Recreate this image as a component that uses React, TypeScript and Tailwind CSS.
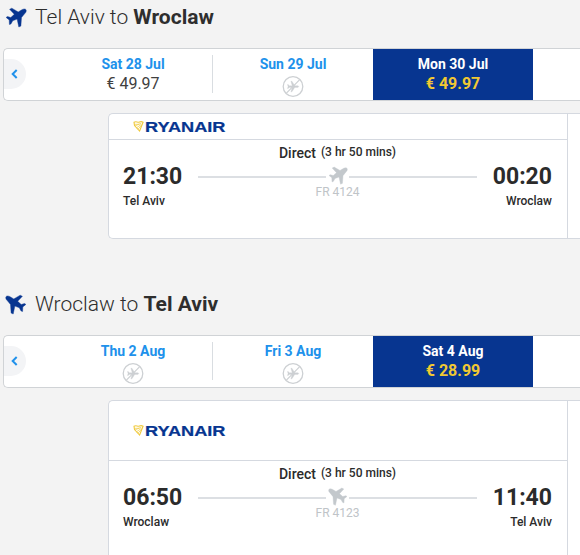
import React from "react";
import clsx from "clsx";

type Day = { label: string; price?: string; selected?: boolean };

type Trip = {
  from: string;
  to: string;
  departs: string;
  arrives: string;
  flight: string;
  inbound?: boolean;
  days: Day[];
};

const trips: Trip[] = [
  {
    from: "Tel Aviv",
    to: "Wroclaw",
    departs: "21:30",
    arrives: "00:20",
    flight: "FR 4124",
    days: [
      { label: "Sat 28 Jul", price: "49.97" },
      { label: "Sun 29 Jul" },
      { label: "Mon 30 Jul", price: "49.97", selected: true },
    ],
  },
  {
    from: "Wroclaw",
    to: "Tel Aviv",
    departs: "06:50",
    arrives: "11:40",
    flight: "FR 4123",
    inbound: true,
    days: [
      { label: "Thu 2 Aug" },
      { label: "Fri 3 Aug" },
      { label: "Sat 4 Aug", price: "28.99", selected: true },
    ],
  },
];

const Plane: React.FC<{ inbound?: boolean; className: string }> = ({ inbound, className }) => (
  <svg viewBox="0 0 22 22" className={clsx("block shrink-0", inbound && "-scale-x-100", className)}>
    <path
      d="M21 2.700C20.300 1.600 18.500 1.900 17.300 2.500L13.200 4.900 6.800 1.200 4.600 2.300l4.700 5-3.500 3.200-3.300-1L1.100 10.400l3.100 2.500.2 4.600 1.600-.6 1.700-3.100 4.400-1.700 1.700 7.900 2.100-.9.600-8.500L20 6.300c1.100-1.100 1.600-2.500 1-3.600z"
      fill="currentColor"
      stroke="currentColor"
      strokeWidth=".4"
      strokeLinejoin="round"
    />
  </svg>
);

const NoFlight = () => (
  <svg viewBox="0 0 22 22" className="mt-[2px] size-[22px] text-[#cdd0d3]" fill="none" stroke="currentColor">
    <circle cx="11" cy="10.500" r="9.8" strokeWidth="1.3" />
    <path
      d="M21 16v-2l-8-5V3.500c0-.83-.67-1.500-1.500-1.500S10 2.670 10 3.500V9l-8 5v2l8-2.500V19l-2 1.500V22l3.500-1 3.500 1v-1.500L13 19v-5.500l8 2.500z"
      transform="translate(17.800 4.100) rotate(90) scale(.56)"
      fill="currentColor"
      strokeWidth=".5"
    />
    <path d="M4.400 17.100 17.500 3.900" strokeWidth="1.200" />
  </svg>
);

const Logo = () => (
  <svg viewBox="0 0 94 14" className="block h-[14px] w-[94px]">
    {/* harp */}
    <g fill="none" stroke="#f0ca3e">
      <path d="M1 2.300C3 .9 4.600 2.800 6.500 2c1.600-.7 2.500-.4 3.600.3L6.600 11 1.500 5.500z" strokeWidth="1.100" />
      <path d="M1.500 4.300h5M2 6l6-2.800M3.500 7.900 8.700 4M5 9.200l3.500-4" strokeWidth=".7" />
    </g>
    <text
      x="12"
      y="11.500"
      textLength="80.500"
      lengthAdjust="spacingAndGlyphs"
      fill="#073590"
      stroke="#073590"
      strokeWidth=".2"
      className="font-['Liberation_Sans',sans-serif] text-[14px] font-bold"
    >
      RYANAIR
    </text>
  </svg>
);

const DayCell: React.FC<{ day: Day; divided: boolean }> = ({ day, divided }) => (
  <div
    className={clsx(
      "flex w-[160px] shrink-0 flex-col items-center pt-[5px]",
      day.selected ? "bg-[#073590]" : "relative"
    )}
  >
    <span className={clsx("text-[14px] leading-5 font-bold", day.selected ? "text-white" : "text-[#2091eb]")}>
      {day.label}
    </span>
    {day.price ? (
      <span className={clsx("text-[16px] leading-[19px]", day.selected ? "font-bold text-[#f1c933]" : "text-[#404040]")}>
        € {day.price}
      </span>
    ) : (
      <NoFlight />
    )}
    {divided && <span className="absolute top-[6px] right-0 h-[38px] w-px bg-[#d9dde1]" />}
  </div>
);

const DateBar: React.FC<{ days: Day[] }> = ({ days }) => (
  <div className="ml-[3px] flex h-[53px] rounded-l-[5px] border border-r-0 border-[#d0d3d6] bg-white">
    <div className="w-[49px] shrink-0 pt-[10px]">
      <div className="flex h-[30px] w-[22px] items-center rounded-r-full bg-[#f3f4f6] pl-[7px]">
        <svg viewBox="0 0 7 10" className="mb-px h-[10px] w-[7px]" fill="none" stroke="#2091eb" strokeWidth="2">
          <path d="M5.700 1 1.700 5l4 4" />
        </svg>
      </div>
    </div>
    {days.map((day, i) => (
      <DayCell key={day.label} day={day} divided={i === 0} />
    ))}
  </div>
);

const FlightCard: React.FC<{ trip: Trip }> = ({ trip }) => (
  <div
    className={clsx(
      "mt-[12px] ml-[108px] flex border border-r-0 border-[#d5d9e0] bg-white",
      trip.inbound ? "h-[155px] rounded-tl-[5px] border-b-0" : "h-[126px] rounded-l-[5px]"
    )}
  >
    <div className="w-[459px] shrink-0 border-r border-[#d5d9e0]">
      <div
        className={clsx(
          "flex items-center border-b border-[#d5d9e0] pl-[24px]",
          trip.inbound ? "h-[60px]" : "h-[26px]"
        )}
      >
        <Logo />
      </div>
      <div className="flex justify-between pr-[15px] pl-[14px] text-[#2b2b2b]">
        <div className="w-[75px] pt-[23px]">
          <p className="text-[23px] leading-7 font-bold">{trip.departs}</p>
          <p className="mt-[2px] text-[12px] leading-4 font-medium">{trip.from}</p>
        </div>
        <div className="w-[279px] pt-[3px]">
          <p className="flex justify-center gap-[5px] leading-5 font-medium">
            <span className="text-[14px]">Direct</span>
            <span className="pt-px text-[12px] leading-[17px]">(3 hr 50 mins)</span>
          </p>
          <div className="mt-[4px] flex h-[20px] items-center">
            <span className="h-[2px] flex-1 bg-[#dcdfe3]" />
            <span className="flex w-[23px] justify-center pb-[3px]">
              <Plane inbound={trip.inbound} className="size-[20px] text-[#c3c8cc]" />
            </span>
            <span className="h-[2px] flex-1 bg-[#dcdfe3]" />
          </div>
          <p className="-mt-[2px] text-center text-[12px] leading-[14px] text-[#c0c4c8]">{trip.flight}</p>
        </div>
        <div className="w-[75px] pt-[23px] text-right">
          <p className="text-[23px] leading-7 font-bold">{trip.arrives}</p>
          <p className="mt-[2px] text-[12px] leading-4 font-medium">{trip.to}</p>
        </div>
      </div>
    </div>
  </div>
);

export default function App() {
  return (
    <main className="h-[555px] w-[580px] overflow-hidden bg-[#f3f3f3] font-[Roboto,sans-serif]">
      {trips.map((trip) => (
        <section key={trip.flight} className={clsx(trip.inbound && "mt-[48px]")}>
          <h2 className="flex h-[48px] items-start pt-[5px] pl-[5px] text-[21px] leading-6 text-[#2e2e2e]">
            <Plane inbound={trip.inbound} className="mt-[2px] size-[22px] text-[#073590]" />
            <span className="ml-[8px] font-light">
              {trip.from} to <b className="font-bold">{trip.to}</b>
            </span>
          </h2>
          <DateBar days={trip.days} />
          <FlightCard trip={trip} />
        </section>
      ))}
    </main>
  );
}
